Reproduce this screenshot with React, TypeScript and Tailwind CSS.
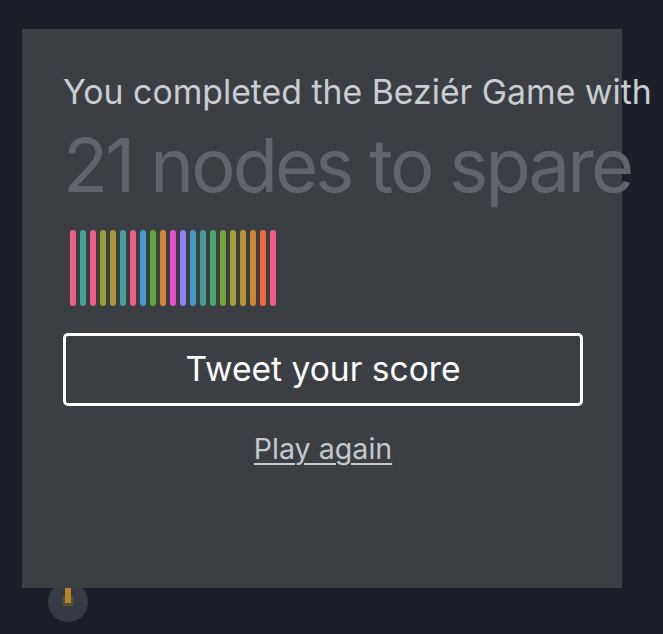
const bars = [
  "#ef5f85",
  "#46a09a",
  "#ef5f85",
  "#95a03a",
  "#a8983a",
  "#46a09a",
  "#ef5f85",
  "#4799c6",
  "#5ba93a",
  "#cf8834",
  "#e94fcf",
  "#8f80f6",
  "#449bc2",
  "#479b8f",
  "#4aa56a",
  "#74a53a",
  "#a59e3a",
  "#b89436",
  "#cf8632",
  "#ef6a3e",
  "#ef5f85",
];

export default function App() {
  return (
    <div
      className="relative flex h-[634px] w-[663px] overflow-hidden bg-[#1b1f29] pl-[22px] pt-[29px] pb-[46px]"
      style={{ fontFamily: "Inter, 'Noto Sans', sans-serif" }}
    >
      {/* node handle peeking from under the panel */}
      <div className="absolute left-[48px] top-[582px] flex h-[40px] w-[40px] items-start justify-center rounded-full bg-[#363b46]">
        <div className="relative mt-[14px] h-[10px] w-[10px] bg-[#5a4f34]">
          <div className="absolute -top-[8px] left-[2px] h-[15px] w-[6px] bg-[#b8862a]" />
        </div>
      </div>

      <section className="relative flex w-[600px] flex-col items-start bg-[#3b3f44] pl-[41px] pt-[39px]">
        <p className="whitespace-nowrap text-[33.8px] leading-[48px] text-[#c9ccd0]">
          You completed the Beziér Game with
        </p>
        <p className="mt-[9px] whitespace-nowrap text-[74px] leading-[80px] tracking-[-2.9px] text-[#60656c]">
          21 nodes to spare
        </p>
        <div className="mt-[25px] flex gap-[4px] pl-[7px]">
          {bars.map((c, i) => (
            <div
              key={i}
              className="h-[76px] w-[6px] rounded-full"
              style={{ backgroundColor: c }}
            />
          ))}
        </div>
        <button className="mt-[27px] flex h-[73px] w-[520px] items-center justify-center rounded-[5px] border-[3px] border-white text-[33.6px] text-white">
          Tweet your score
        </button>
        <div className="mt-[25px] w-[520px] text-center leading-[36px]">
          <a className="text-[28.6px] text-[#c5c8cc] underline decoration-2 underline-offset-4">
            Play again
          </a>
        </div>
      </section>
    </div>
  );
}
